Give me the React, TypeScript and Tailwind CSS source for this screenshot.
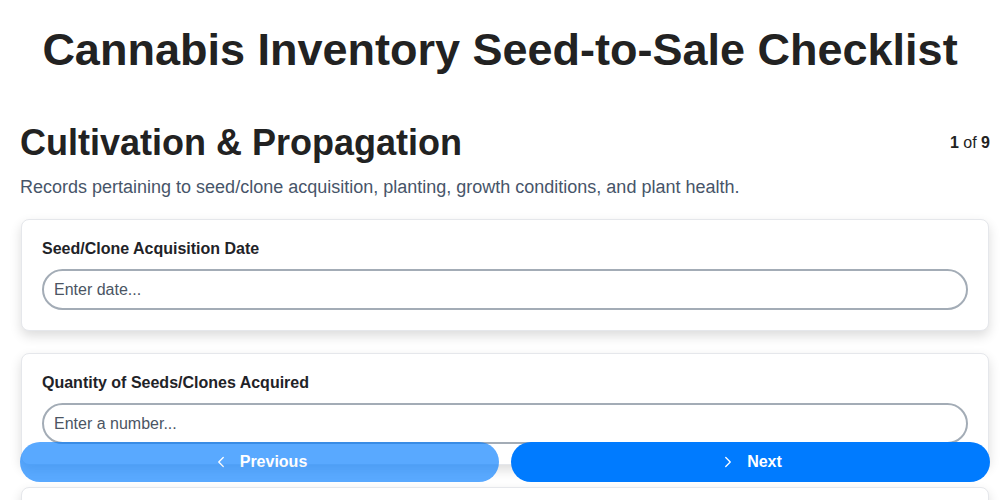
import React from 'react';
import { ChevronLeft, ChevronRight } from 'lucide-react';

interface Field {
  label: string;
  placeholder: string;
}

const fields: Field[] = [
  { label: 'Seed/Clone Acquisition Date', placeholder: 'Enter date...' },
  { label: 'Quantity of Seeds/Clones Acquired', placeholder: 'Enter a number...' },
  { label: 'Strain Name', placeholder: 'Enter text...' },
];

const FieldCard: React.FC<{ field: Field }> = ({ field }) => (
  <div className="mx-px rounded-lg border border-[#e5e7eb] bg-white px-5 pt-[19px] pb-5 shadow-[0_5px_12px_rgba(0,0,0,0.14)]">
    <label className="block text-[16px] font-bold leading-5 text-[#1f2328]">{field.label}</label>
    <input
      type="text"
      placeholder={field.placeholder}
      className="mt-[10px] block h-[41px] w-full rounded-full border-2 border-[#a3acb6] bg-white px-[10px] text-[16px] text-[#1f2328] outline-none placeholder:text-[#4b5563]"
    />
  </div>
);

export default function App() {
  return (
    <div className="min-h-[500px] bg-white font-['Liberation_Sans',Arial,sans-serif] text-[#222]">
      <h1 className="pt-[25px] text-center text-[45px] font-bold leading-[50px] text-[#222]">
        Cannabis Inventory Seed-to-Sale Checklist
      </h1>

      <div className="pl-5 pr-[10px]">
        <div className="mt-[46px] flex items-start justify-between">
          <h2 className="text-[36px] font-bold leading-[44px] text-[#222]">Cultivation &amp; Propagation</h2>
          <div className="pt-[10px] text-[16px] text-[#222]">
            <span className="font-bold">1</span> of <span className="font-bold">9</span>
          </div>
        </div>
        <p className="mt-[11px] text-[18px] leading-[22px] text-[#475569]">
          Records pertaining to seed/clone acquisition, planting, growth conditions, and plant health.
        </p>

        <div className="mt-[21px] flex flex-col gap-[22px] pb-24">
          {fields.map((f) => (
            <FieldCard key={f.label} field={f} />
          ))}
        </div>
      </div>

      {/* 底部导航 */}
      <div className="fixed bottom-[18px] left-5 right-[10px] flex gap-3">
        <button className="flex h-10 flex-1 items-center justify-center gap-[10px] rounded-full bg-[#007bff] text-[16px] font-bold text-white opacity-65">
          <ChevronLeft className="h-[18px] w-[18px]" strokeWidth={1.75} />
          Previous
        </button>
        <button className="flex h-10 flex-1 items-center justify-center gap-[10px] rounded-full bg-[#007bff] text-[16px] font-bold text-white">
          <ChevronRight className="h-[18px] w-[18px]" strokeWidth={1.75} />
          Next
        </button>
      </div>
    </div>
  );
}
